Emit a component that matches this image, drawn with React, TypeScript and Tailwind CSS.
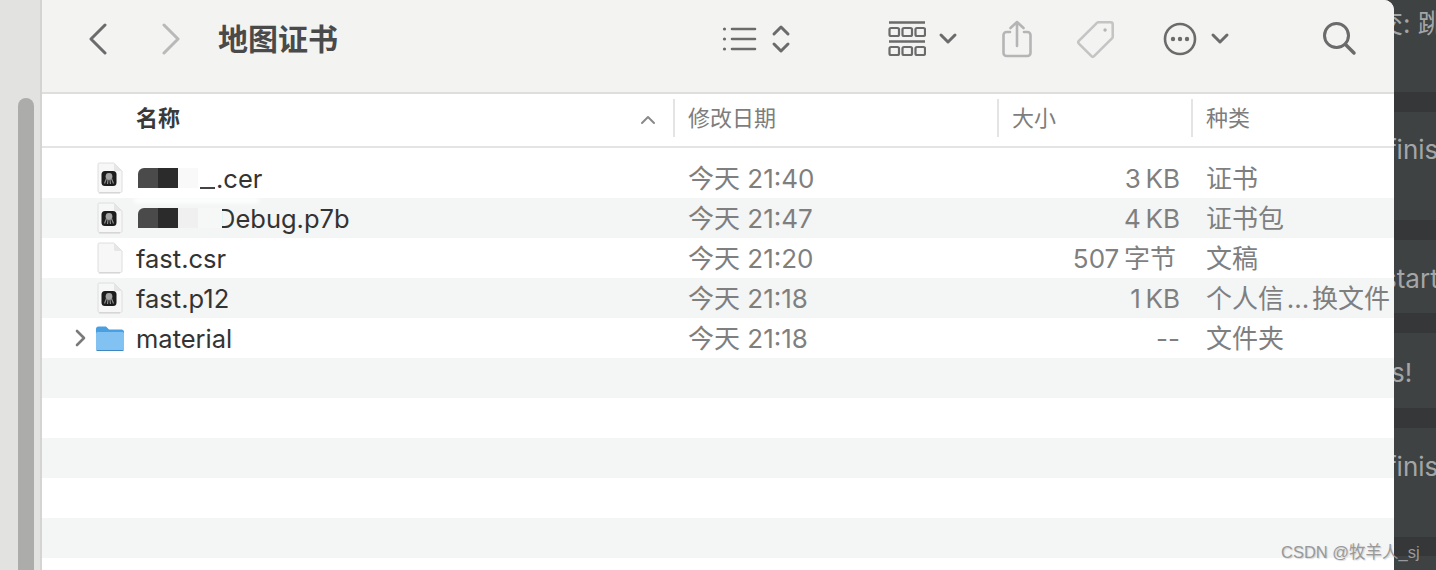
const uiFont = "font-['Inter','Noto_Sans_CJK_SC',sans-serif]";

function DocIcon({ badge = true }: { badge?: boolean }) {
  return (
    <svg width="30" height="32" viewBox="0 0 30 32" fill="none">
      <path d="M3 2.500a1.500 1.500 0 0 1 1.500-1.500H19l8 8v20a1.500 1.500 0 0 1-1.500 1.500h-21A1.500 1.500 0 0 1 3 29z" fill="#f7f7f7" stroke="#dedede" />
      <path d="M19 1v6.500A1.500 1.500 0 0 0 20.500 9H27z" fill="#e6e6e6" />
      <path d="M4 31h21" stroke="#cfcfcf" />
      {badge && (
        <g>
          <rect x="6.500" y="9" width="15" height="15" rx="3.500" fill="#1c1c1c" />
          <circle cx="14" cy="14.500" r="3.400" fill="#a4a4a4" />
          <path d="M9.500 21.500l2-5M12.500 22l.6-5M15.500 22l-.6-5M18.500 21.500l-2-5" stroke="#8f8f8f" strokeWidth="1.200" />
        </g>
      )}
    </svg>
  );
}

function FolderIcon() {
  return (
    <svg width="30" height="28" viewBox="0 0 30 28">
      <path d="M1 5a2.500 2.500 0 0 1 2.500-2.500h7.500l3 3h12.500A2.500 2.500 0 0 1 29 8v16a2.500 2.500 0 0 1-2.500 2.500h-23A2.500 2.500 0 0 1 1 24z" fill="#4a9fe0" />
      <path d="M1 9.500a1.500 1.500 0 0 1 1.500-1.500h25A1.500 1.500 0 0 1 29 9.500V24a2.500 2.500 0 0 1-2.500 2.500h-23A2.500 2.500 0 0 1 1 24z" fill="#82c2f2" />
      <path d="M1.500 26.500h27" stroke="#3f87bf" strokeWidth="1" />
    </svg>
  );
}

function Redacted({ fade, wide }: { fade: string; wide: string }) {
  return (
    <span className="relative z-10 ml-[2px] flex h-[20px] shrink-0">
      <span className="w-[20px] rounded-tl-[6px] bg-[#4a4a4a]" />
      <span className="w-[20px] bg-[#2b2b2b]" />
      <span className={`w-[20px] ${fade}`} />
      <span className={wide} />
    </span>
  );
}

const rows = [
  { name: ".cer", date: "今天 21:40", size: "3\u2009KB", kind: "证书", blur: 1 },
  { name: "Debug.p7b", date: "今天 21:47", size: "4\u2009KB", kind: "证书包", blur: 2 },
  { name: "fast.csr", date: "今天 21:20", size: "507\u2009字节", kind: "文稿", doc: true, sizePad: "pr-[15px]" },
  { name: "fast.p12", date: "今天 21:18", size: "1\u2009KB", kind: "个人信...换文件" },
  { name: "material", date: "今天 21:18", size: "--", kind: "文件夹", folder: true },
];

const bands = [
  { h: "h-[92px]", pt: "pt-[8px]", text: "交: 跳", ml: "-ml-[17px]" },
  { h: "h-[20px]", dark: true },
  { h: "h-[108px]", pt: "pt-[22px]", text: "finish", ml: "-ml-[7px]" },
  { h: "h-[20px]", dark: true },
  { h: "h-[73px]", pt: "pt-[23px]", text: "start", ml: "-ml-[11px]" },
  { h: "h-[20px]", dark: true },
  { h: "h-[75px]", pt: "pt-[24px]", text: "s!", ml: "-ml-[3px]" },
  { h: "h-[20px]", dark: true },
  { h: "h-[109px]", pt: "pt-[23px]", text: "finish", ml: "-ml-[7px]" },
  { h: "h-[19px]", dark: true },
  { h: "h-[14px]" },
];

function KindLabel({ kind }: { kind: string }) {
  const parts = kind.split("...");
  if (parts.length === 1) return <>{kind}</>;
  return (
    <>
      {parts[0]}
      <span className="inline-block w-[28px] text-center">...</span>
      {parts[1]}
    </>
  );
}

export default function App() {
  return (
    <div className={`relative flex h-[570px] w-[1436px] overflow-hidden bg-[#3f4243] ${uiFont}`}>
      {/* desktop sliver on the left with its scroll bar */}
      <div className="flex h-full w-[42px] shrink-0 bg-[#e2e2e0] pt-[98px] pl-[18px] border-r-2 border-[#d4d4d2]">
        <div className="h-full w-[16px] rounded-t-[8px] bg-[#acacaa]" />
      </div>

      {/* finder window */}
      <div className="flex h-full w-[1352px] shrink-0 flex-col overflow-hidden rounded-tr-[10px] bg-white">
        <div className="flex h-[94px] shrink-0 items-center border-b-2 border-[#dededc] bg-[#f3f3f2] pb-[14px]">
          <svg className="ml-[46px]" width="20" height="32" viewBox="0 0 20 32" fill="none" stroke="#6b6b6b" strokeWidth="3" strokeLinecap="round" strokeLinejoin="round">
            <path d="M17 2 3 16l14 14" />
          </svg>
          <svg className="ml-[53px]" width="20" height="32" viewBox="0 0 20 32" fill="none" stroke="#b9b9b9" strokeWidth="3" strokeLinecap="round" strokeLinejoin="round">
            <path d="M3 2l14 14L3 30" />
          </svg>
          <span className="ml-[37px] text-[30px] leading-none font-bold text-[#4a4a4a]">地图证书</span>

          <svg className="ml-[383px]" width="36" height="28" viewBox="0 0 36 28" fill="none" stroke="#6b6b6b" strokeWidth="2.600" strokeLinecap="round">
            <path d="M11 4h23M11 14h23M11 24h23" />
            <circle cx="3.500" cy="4" r="1.600" fill="#6b6b6b" stroke="none" />
            <circle cx="3.500" cy="14" r="1.600" fill="#6b6b6b" stroke="none" />
            <circle cx="3.500" cy="24" r="1.600" fill="#6b6b6b" stroke="none" />
          </svg>
          <svg className="ml-[14px]" width="20" height="30" viewBox="0 0 20 30" fill="none" stroke="#6b6b6b" strokeWidth="3" strokeLinecap="round" strokeLinejoin="round">
            <path d="M3 10l7-7 7 7M3 20l7 7 7-7" />
          </svg>
          <svg className="ml-[97px]" width="38" height="36" viewBox="0 0 38 36" fill="none" stroke="#6b6b6b" strokeWidth="2.200">
            <path d="M1 1.500h36M1 20.500h36" strokeWidth="2.600" />
            <rect x="1.500" y="7" width="9.500" height="8" rx="1.500" />
            <rect x="14.500" y="7" width="9.500" height="8" rx="1.500" />
            <rect x="27.500" y="7" width="9.500" height="8" rx="1.500" />
            <rect x="1.500" y="26" width="9.500" height="8" rx="1.500" />
            <rect x="14.500" y="26" width="9.500" height="8" rx="1.500" />
            <rect x="27.500" y="26" width="9.500" height="8" rx="1.500" />
          </svg>
          <svg className="ml-[12px]" width="20" height="14" viewBox="0 0 20 14" fill="none" stroke="#6b6b6b" strokeWidth="3" strokeLinecap="round" strokeLinejoin="round">
            <path d="M3 3l7 7 7-7" />
          </svg>
          <svg className="ml-[42px]" width="34" height="38" viewBox="0 0 34 38" fill="none" stroke="#b5b5b5" strokeWidth="2.600" strokeLinecap="round" strokeLinejoin="round">
            <path d="M10 12H6.500A3 3 0 0 0 3.500 15v18a3 3 0 0 0 3 3h21a3 3 0 0 0 3-3V15a3 3 0 0 0-3-3H24" />
            <path d="M17 26V2M10.500 8 17 2l6.500 6" />
          </svg>
          <svg className="ml-[42px]" width="40" height="40" viewBox="0 0 42 42" fill="none" stroke="#c4c4c4" strokeWidth="2.700" strokeLinejoin="round">
            <path d="M3 23 22 4a2 2 0 0 1 1.500-.6l13 .1a2 2 0 0 1 2 2l.1 13a2 2 0 0 1-.6 1.500L19 39a2 2 0 0 1-2.800 0L3 25.800a2 2 0 0 1 0-2.800z" />
            <circle cx="30.500" cy="11.500" r="1.800" fill="#b5b5b5" stroke="none" />
          </svg>
          <svg className="ml-[47px]" width="34" height="34" viewBox="0 0 34 34" fill="none">
            <circle cx="17" cy="17" r="15" stroke="#6b6b6b" strokeWidth="2.600" />
            <circle cx="10" cy="17" r="2.200" fill="#6b6b6b" />
            <circle cx="17" cy="17" r="2.200" fill="#6b6b6b" />
            <circle cx="24" cy="17" r="2.200" fill="#6b6b6b" />
          </svg>
          <svg className="ml-[13px]" width="20" height="14" viewBox="0 0 20 14" fill="none" stroke="#6b6b6b" strokeWidth="3" strokeLinecap="round" strokeLinejoin="round">
            <path d="M3 3l7 7 7-7" />
          </svg>
          <svg className="ml-[92px]" width="36" height="36" viewBox="0 0 36 36" fill="none" stroke="#6b6b6b" strokeWidth="3" strokeLinecap="round">
            <circle cx="14.500" cy="14.500" r="12" />
            <path d="M23.500 23.500 32 32" strokeWidth="3.500" />
          </svg>
        </div>

        {/* column header */}
        <div className="grid h-[54px] shrink-0 grid-cols-[631px_324px_194px_203px] items-center border-b-2 border-[#e4e4e4] pb-[4px] text-[22px] text-[#7d7d7d]">
          <div className="relative flex h-full items-center pl-[94px] font-bold text-[#3a3a3a]">
            名称
            <svg className="absolute right-[17px] top-[20px]" width="16" height="12" viewBox="0 0 16 12" fill="none" stroke="#8a8a8a" strokeWidth="2" strokeLinecap="round" strokeLinejoin="round">
              <path d="M2 9l6-6 6 6" />
            </svg>
          </div>
          <div className="flex h-[38px] items-center border-l-2 border-[#e4e4e4] pl-[13px]">修改日期</div>
          <div className="flex h-[38px] items-center border-l-2 border-[#e4e4e4] pl-[13px]">大小</div>
          <div className="flex h-[38px] items-center border-l-2 border-[#e4e4e4] pl-[13px]">种类</div>
        </div>

        <div className="h-[10px] shrink-0" />

        {/* file rows */}
        {rows.map((row, i) => (
          <div
            key={row.name}
            className={`grid h-[40px] shrink-0 grid-cols-[631px_324px_194px_203px] items-center text-[26px] text-[#7f7f7f] ${i % 2 === 1 ? "bg-[#f4f5f5]" : "bg-white"}`}
          >
            <div className="relative flex h-full items-center text-[25.500px] text-[#333333]">
              {row.blur === 2 && <span className="absolute left-[92px] top-0 h-[5px] w-[125px] bg-white blur-[2px]" />}
              <span className="flex w-[52px] shrink-0 justify-end pr-[8px]">
                {row.folder && (
                  <svg width="11" height="18" viewBox="0 0 11 18" fill="none" stroke="#7a7a7a" strokeWidth="2.600" strokeLinecap="round" strokeLinejoin="round">
                    <path d="M2 2l7 7-7 7" />
                  </svg>
                )}
              </span>
              <span className="flex w-[42px] shrink-0 items-center pl-[1px]">
                {row.folder ? <FolderIcon /> : <DocIcon badge={!row.doc} />}
              </span>
              {row.blur === 1 && <Redacted fade="bg-[#f9f9f9]" wide="w-[2px]" />}
              {row.blur === 1 && <span className="mb-[9px] h-[2px] w-[15px] self-end bg-[#444444]" />}
              {row.blur === 2 && <Redacted fade="bg-[#f0f0f0]" wide="w-[24px] bg-[#f6f7f7]" />}
              <span className={`pt-[2px] ${row.blur === 2 ? "-ml-[5px]" : row.blur === 1 ? "ml-[1px]" : "ml-0"}`}>{row.name}</span>
            </div>
            <div className="pl-[15px]">{row.date}</div>
            <div className={`text-right ${row.sizePad ?? "pr-[11px]"}`}>{row.size}</div>
            <div className="pl-[15px] whitespace-nowrap"><KindLabel kind={row.kind} /></div>
          </div>
        ))}

        {/* empty striped rows */}
        <div className="h-[40px] shrink-0 bg-[#f4f5f5]" />
        <div className="h-[40px] shrink-0 bg-white" />
        <div className="h-[40px] shrink-0 bg-[#f4f5f5]" />
        <div className="h-[40px] shrink-0 bg-white" />
        <div className="h-[40px] shrink-0 bg-[#f4f5f5]" />
        <div className="h-[12px] shrink-0 bg-white" />
      </div>

      {/* terminal behind the window */}
      <div className="flex h-full w-[42px] shrink-0 flex-col overflow-hidden text-[26px] leading-[32px] text-[#a4a6a6]">
        {bands.map((b, i) => (
          <div key={i} className={`shrink-0 whitespace-nowrap ${b.h} ${b.pt ?? ""} ${b.dark ? "bg-[#363738]" : ""}`}>
            {b.text && <div className={b.ml}>{b.text}</div>}
          </div>
        ))}
      </div>

      {/* watermark */}
      <div className="absolute left-[1281px] top-[541px] text-[16.500px] whitespace-nowrap leading-[22px] text-[#999999] [text-shadow:1px_1px_1px_rgba(60,60,60,0.2)] font-['Liberation_Sans','Noto_Sans_CJK_SC',sans-serif]">
        CSDN @牧羊人_sj
      </div>
    </div>
  );
}
